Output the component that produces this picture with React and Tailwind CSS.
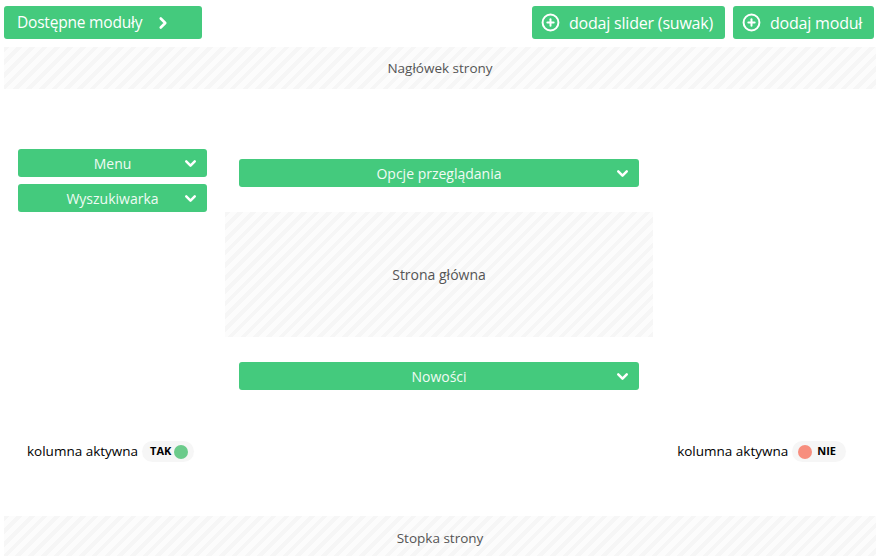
import { ChevronDown, ChevronRight, CirclePlus } from "lucide-react";

const stripes =
  "bg-[repeating-linear-gradient(135deg,#f6f6f6_0px,#f6f6f6_4px,#fcfcfc_4px,#fcfcfc_9px)]";

function GreenButton({ children, className = "" }) {
  return (
    <div
      className={`flex items-center rounded-[3px] bg-[#44ca7d] text-white ${className}`}
    >
      {children}
    </div>
  );
}

function ModuleBar({ label, className = "" }) {
  return (
    <div
      className={`relative flex h-[28px] items-center justify-center rounded-[3px] bg-[#44ca7d] text-[14px] text-[#f0fbf4] ${className}`}
    >
      <span>{label}</span>
      <ChevronDown
        className="absolute right-[8px] top-[6px] text-white"
        size={17}
        strokeWidth={3.5}
      />
    </div>
  );
}

function Toggle({ on }) {
  return (
    <div className="flex items-center gap-[4px] text-[13.5px] text-black">
      <span>kolumna aktywna</span>
      <div className="flex h-[21px] items-center gap-[3px] rounded-full bg-[#f6f6f6] px-[6px] text-[11px] font-bold">
        {on ? (
          <>
            <span className="pl-[2px]">TAK</span>
            <span className="h-[14px] w-[14px] rounded-full bg-[#6bcb8b]" />
          </>
        ) : (
          <>
            <span className="h-[14px] w-[14px] rounded-full bg-[#f78e7e]" />
            <span className="pl-[2px] pr-[4px]">NIE</span>
          </>
        )}
      </div>
    </div>
  );
}

export default function App() {
  return (
    <div className="h-[556px] w-[880px] overflow-hidden bg-white px-[4px] pt-[6px] font-['Open_Sans',sans-serif]">
      <div className="flex h-[33px] justify-between pr-[2px]">
        <GreenButton className="w-[198px] pl-[13px] text-[15.5px]">
          <span className="tracking-[-0.2px]">Dostępne moduły</span>
          <ChevronRight className="ml-[12px]" size={18} strokeWidth={3.5} />
        </GreenButton>
        <div className="flex gap-[8px]">
          <GreenButton className="w-[193px] pl-[9px] text-[16px]">
            <CirclePlus size={19} strokeWidth={2.5} />
            <span className="ml-[9px] tracking-[-0.2px]">dodaj slider (suwak)</span>
          </GreenButton>
          <GreenButton className="w-[141px] pl-[9px] text-[16px]">
            <CirclePlus size={19} strokeWidth={2.5} />
            <span className="ml-[9px] tracking-[-0.2px]">dodaj moduł</span>
          </GreenButton>
        </div>
      </div>

      <div
        className={`mt-[8px] flex h-[42px] items-center justify-center text-[13.5px] text-[#555] ${stripes}`}
      >
        Nagłówek strony
      </div>

      <div className="grid grid-cols-[221px_428px_223px]">
        <div className="flex flex-col gap-[7px] pl-[14px] pr-[18px] pt-[60px]">
          <ModuleBar label="Menu" />
          <ModuleBar label="Wyszukiwarka" />
        </div>
        <div className="flex flex-col pt-[70px]">
          <ModuleBar label="Opcje przeglądania" className="mx-[14px]" />
          <div
            className={`mt-[25px] flex h-[125px] items-center justify-center text-[14px] text-[#555] ${stripes}`}
          >
            Strona główna
          </div>
          <ModuleBar label="Nowości" className="mx-[14px] mt-[25px]" />
        </div>
        <div />
      </div>

      <div className="mt-[51px] flex justify-between pl-[23px] pr-[30px]">
        <Toggle on />
        <Toggle on={false} />
      </div>

      <div
        className={`mt-[54px] flex h-[44px] items-center justify-center text-[13.5px] text-[#555] ${stripes}`}
      >
        Stopka strony
      </div>
    </div>
  );
}
